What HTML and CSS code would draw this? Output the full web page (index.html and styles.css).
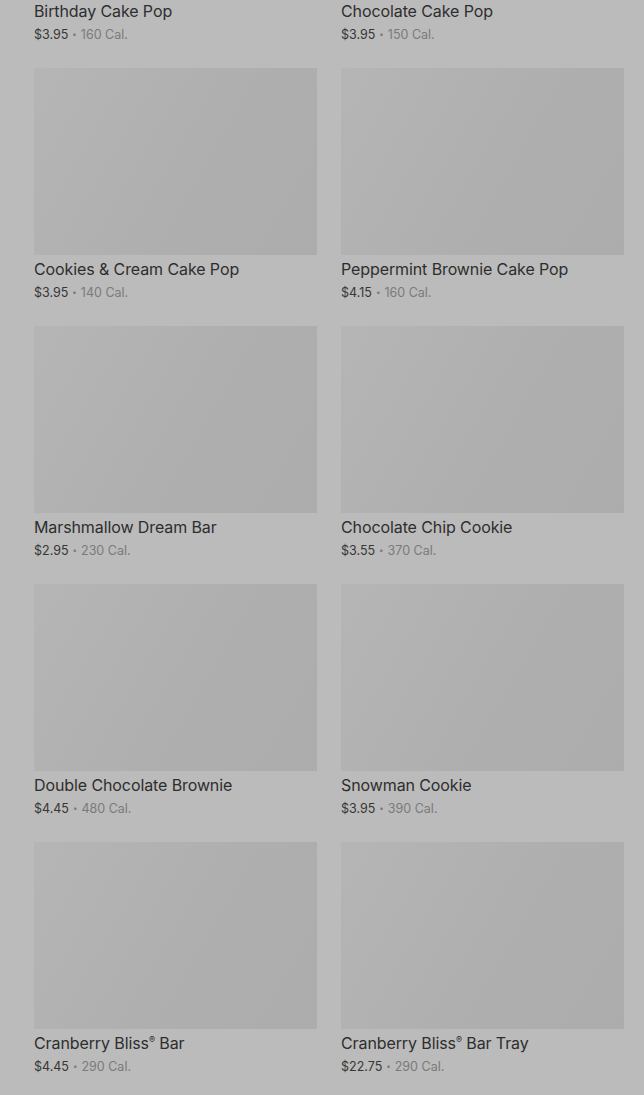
FILE: index.html
```html
<!DOCTYPE html>
<html lang="en">
<head>
<meta charset="utf-8">
<title>Menu</title>
<link rel="stylesheet" href="styles.css">
</head>
<body>
<main class="grid">
  <article class="card"><div class="thumb"></div><h3 class="name">Birthday Cake Pop</h3><p class="meta"><span class="price">$3.95</span><span class="dot">•</span>160 Cal.</p></article>
  <article class="card"><div class="thumb"></div><h3 class="name">Chocolate Cake Pop</h3><p class="meta"><span class="price">$3.95</span><span class="dot">•</span>150 Cal.</p></article>
  <article class="card"><div class="thumb"></div><h3 class="name">Cookies &amp; Cream Cake Pop</h3><p class="meta"><span class="price">$3.95</span><span class="dot">•</span>140 Cal.</p></article>
  <article class="card"><div class="thumb"></div><h3 class="name">Peppermint Brownie Cake Pop</h3><p class="meta"><span class="price">$4.15</span><span class="dot">•</span>160 Cal.</p></article>
  <article class="card"><div class="thumb"></div><h3 class="name">Marshmallow Dream Bar</h3><p class="meta"><span class="price">$2.95</span><span class="dot">•</span>230 Cal.</p></article>
  <article class="card"><div class="thumb"></div><h3 class="name">Chocolate Chip Cookie</h3><p class="meta"><span class="price">$3.55</span><span class="dot">•</span>370 Cal.</p></article>
  <article class="card"><div class="thumb"></div><h3 class="name">Double Chocolate Brownie</h3><p class="meta"><span class="price">$4.45</span><span class="dot">•</span>480 Cal.</p></article>
  <article class="card"><div class="thumb"></div><h3 class="name">Snowman Cookie</h3><p class="meta"><span class="price">$3.95</span><span class="dot">•</span>390 Cal.</p></article>
  <article class="card"><div class="thumb"></div><h3 class="name">Cranberry Bliss<sup class="reg">®</sup> Bar</h3><p class="meta"><span class="price">$4.45</span><span class="dot">•</span>290 Cal.</p></article>
  <article class="card"><div class="thumb"></div><h3 class="name">Cranberry Bliss<sup class="reg">®</sup> Bar Tray</h3><p class="meta"><span class="price">$22.75</span><span class="dot">•</span>290 Cal.</p></article>
</main>
</body>
</html>
```
FILE: styles.css
```css
html, body {
  margin: 0;
  padding: 0;
  background: #bbbbbb;
  overflow: hidden;
}
body {
  font-family: Inter, Roboto, "Liberation Sans", sans-serif;
  color: #333333;
}
.grid {
  display: grid;
  grid-template-columns: 283px 283px;
  column-gap: 24px;
  row-gap: 24px;
  padding: 0 20px 0 34px;
  margin-top: -190px;
}
.card {
  display: flex;
  flex-direction: column;
}
.thumb {
  height: 187px;
  background: linear-gradient(120deg, #b5b5b5 0%, #afafaf 55%, #acacac 100%);
}
.name {
  margin: 4px 0 0;
  font-size: 16px;
  line-height: 20px;
  height: 20px;
  font-weight: 400;
  color: #2e2e2e;
  letter-spacing: -0.1px;
}
.reg {
  font-size: 9px;
  line-height: 0;
  vertical-align: 6px;
}
.meta {
  margin: 5px 0 0;
  font-size: 12.5px;
  line-height: 18px;
  height: 18px;
  color: #7a7a7a;
}
.price {
  color: #363636;
}
.dot {
  font-size: 8px;
  line-height: 0;
  margin: 0 4px;
  vertical-align: 2px;
}
```
